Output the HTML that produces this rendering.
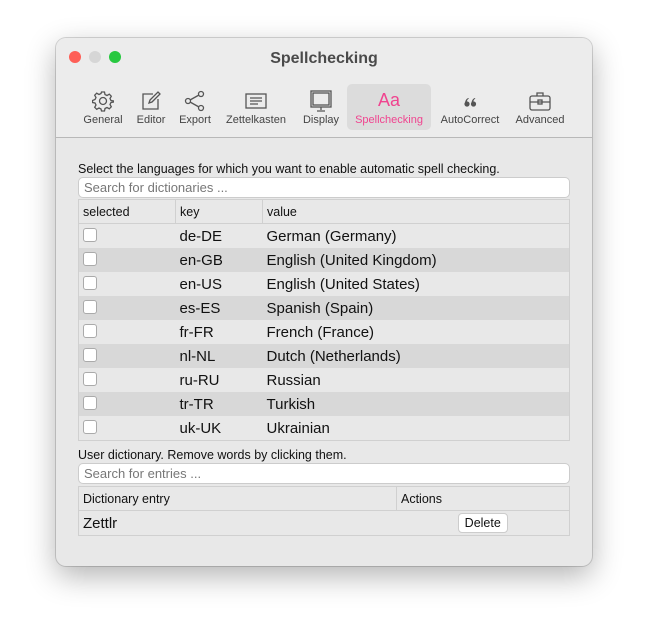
<!DOCTYPE html><html><head><style>
body{margin:0;width:648px;height:641px;background:#fff;font-family:"Liberation Sans",sans-serif;position:relative;overflow:hidden}
.win{position:absolute;left:56px;top:38px;width:536px;height:528px;background:#e8e8e8;border-radius:10px;box-shadow:0 10px 30px rgba(0,0,0,.3),0 0 0 1px rgba(0,0,0,.15);overflow:hidden}
.top{position:absolute;left:0;top:0;width:536px;height:99px;background:#ececec;border-bottom:1px solid #b8b8b8}
.dot{position:absolute;top:13px;width:12px;height:12px;border-radius:50%}
.title{position:absolute;top:12px;width:100%;text-align:center;font-weight:bold;font-size:16px;color:#4a4a4a}
.tb{position:absolute;top:46px;height:46px;text-align:center;font-size:11px;color:#444}
.tb svg{display:block;margin:6px auto 0}
.tb span{position:absolute;left:0;right:0;top:30px}
.a{position:absolute;font-size:12.5px;color:#111}
.search{position:absolute;left:22px;width:492px;height:21px;background:#fff;border:1px solid #ccc;border-radius:5px;font-size:13px;color:#777;box-sizing:border-box;padding:2px 5px}
table{position:absolute;left:22px;width:492px;border-collapse:collapse;font-size:15px;color:#111;border:1px solid #d0d0d0}
td{height:24px;padding:0 4px;border:0}
tr.h td{font-size:12.5px;border:1px solid #d0d0d0;height:23px}
tr.g td{background:#d8d8d8}
tr.w td{background:#e8e8e8}
.cb{display:inline-block;width:12px;height:12px;background:#fff;border:1px solid #aaa;border-radius:3px;vertical-align:-1px}
</style></head><body>
<div class="win">
<div class="top">
<div class="dot" style="left:13px;background:#fe5f57"></div>
<div class="dot" style="left:33px;background:#d6d6d6"></div>
<div class="dot" style="left:53px;background:#28c840"></div>
<div class="title">Spellchecking</div>
<div class="tb" style="left:24px;width:46px"><svg width="22" height="22" viewBox="0 0 22 22" fill="none" stroke="#555" stroke-width="1.3"><circle cx="11" cy="11" r="3.5"/><path d="M9.5 2h3l.5 2.5 2 1 2.3-1.3 2 2-1.3 2.3 1 2L21.5 11v1l-2.5.5-1 2 1.3 2.3-2 2-2.3-1.3-2 1-.5 2.5h-3L9 19l-2-1-2.3 1.3-2-2L4 15l-1-2-2.5-.5v-2L3 9.5l1-2-1.3-2.3 2-2L7 4.5l2-1z"/></svg><span>General</span></div>
<div class="tb" style="left:75px;width:40px"><svg width="22" height="22" viewBox="0 0 22 22" fill="none" stroke="#555" stroke-width="1.3"><path d="M13 4H3v15h15V9"/><path d="M9 13l1-3 8-8 2 2-8 8z"/></svg><span>Editor</span></div>
<div class="tb" style="left:118px;width:42px"><svg width="22" height="22" viewBox="0 0 22 22" fill="none" stroke="#555" stroke-width="1.3"><circle cx="17" cy="4" r="2.5"/><circle cx="4" cy="11" r="2.5"/><circle cx="17" cy="18" r="2.5"/><path d="M6 10l9-5M6 12l9 5"/></svg><span>Export</span></div>
<div class="tb" style="left:164px;width:72px"><svg width="22" height="22" viewBox="0 0 22 22" fill="none" stroke="#555" stroke-width="1.3"><rect x="1" y="4" width="20" height="14"/><path d="M5 8h12M5 11h12M5 14h8"/></svg><span>Zettelkasten</span></div>
<div class="tb" style="left:240px;width:50px"><svg width="22" height="22" viewBox="0 0 22 22" fill="none" stroke="#555" stroke-width="1.3"><rect x="1" y="1" width="20" height="16"/><rect x="3" y="3" width="16" height="12"/><path d="M11 17v3M7 21h8"/></svg><span>Display</span></div>
<div class="tb" style="left:291px;width:84px;background:#dcdcdc;border-radius:5px;top:46px;height:46px;color:#f0448f"><div style="font-size:18px;margin-top:6px;height:22px">Aa</div><span>Spellchecking</span></div>
<div class="tb" style="left:380px;width:68px"><svg width="22" height="22" viewBox="0 0 22 22" fill="#555"><circle cx="8" cy="14" r="2.6"/><circle cx="14.5" cy="14" r="2.6"/><path d="M6 13.5c0-3 1.5-5 3.5-5.5l.3.8c-1.3.6-2 1.8-2 3.5z M12.5 13.5c0-3 1.5-5 3.5-5.5l.3.8c-1.3.6-2 1.8-2 3.5z"/></svg><span>AutoCorrect</span></div>
<div class="tb" style="left:454px;width:60px"><svg width="22" height="22" viewBox="0 0 22 22" fill="none" stroke="#555" stroke-width="1.3"><rect x="1" y="6" width="20" height="14" rx="2"/><path d="M8 6V3h6v3M1 12h20"/><rect x="9" y="10" width="4" height="4"/></svg><span>Advanced</span></div>
</div>
<div class="a" style="left:22px;top:124px">Select the languages for which you want to enable automatic spell checking.</div>
<div class="search" style="top:139px">Search for dictionaries ...</div>
<table style="top:161px">
<tr class="h"><td style="width:88px">selected</td><td style="width:78px">key</td><td>value</td></tr>
<tr class="w"><td><span class="cb"></span></td><td>de-DE</td><td>German (Germany)</td></tr>
<tr class="g"><td><span class="cb"></span></td><td>en-GB</td><td>English (United Kingdom)</td></tr>
<tr class="w"><td><span class="cb"></span></td><td>en-US</td><td>English (United States)</td></tr>
<tr class="g"><td><span class="cb"></span></td><td>es-ES</td><td>Spanish (Spain)</td></tr>
<tr class="w"><td><span class="cb"></span></td><td>fr-FR</td><td>French (France)</td></tr>
<tr class="g"><td><span class="cb"></span></td><td>nl-NL</td><td>Dutch (Netherlands)</td></tr>
<tr class="w"><td><span class="cb"></span></td><td>ru-RU</td><td>Russian</td></tr>
<tr class="g"><td><span class="cb"></span></td><td>tr-TR</td><td>Turkish</td></tr>
<tr class="w"><td><span class="cb"></span></td><td>uk-UK</td><td>Ukrainian</td></tr>
</table>
<div class="a" style="left:22px;top:410px">User dictionary. Remove words by clicking them.</div>
<div class="search" style="top:425px">Search for entries ...</div>
<table style="top:448px">
<tr class="h"><td style="width:309px">Dictionary entry</td><td>Actions</td></tr>
<tr class="w"><td>Zettlr</td><td style="text-align:center"><span style="display:inline-block;background:#fff;border:1px solid #ccc;border-radius:4px;font-size:12.5px;padding:2px 6px">Delete</span></td></tr>
</table>
</div>
</body></html>
